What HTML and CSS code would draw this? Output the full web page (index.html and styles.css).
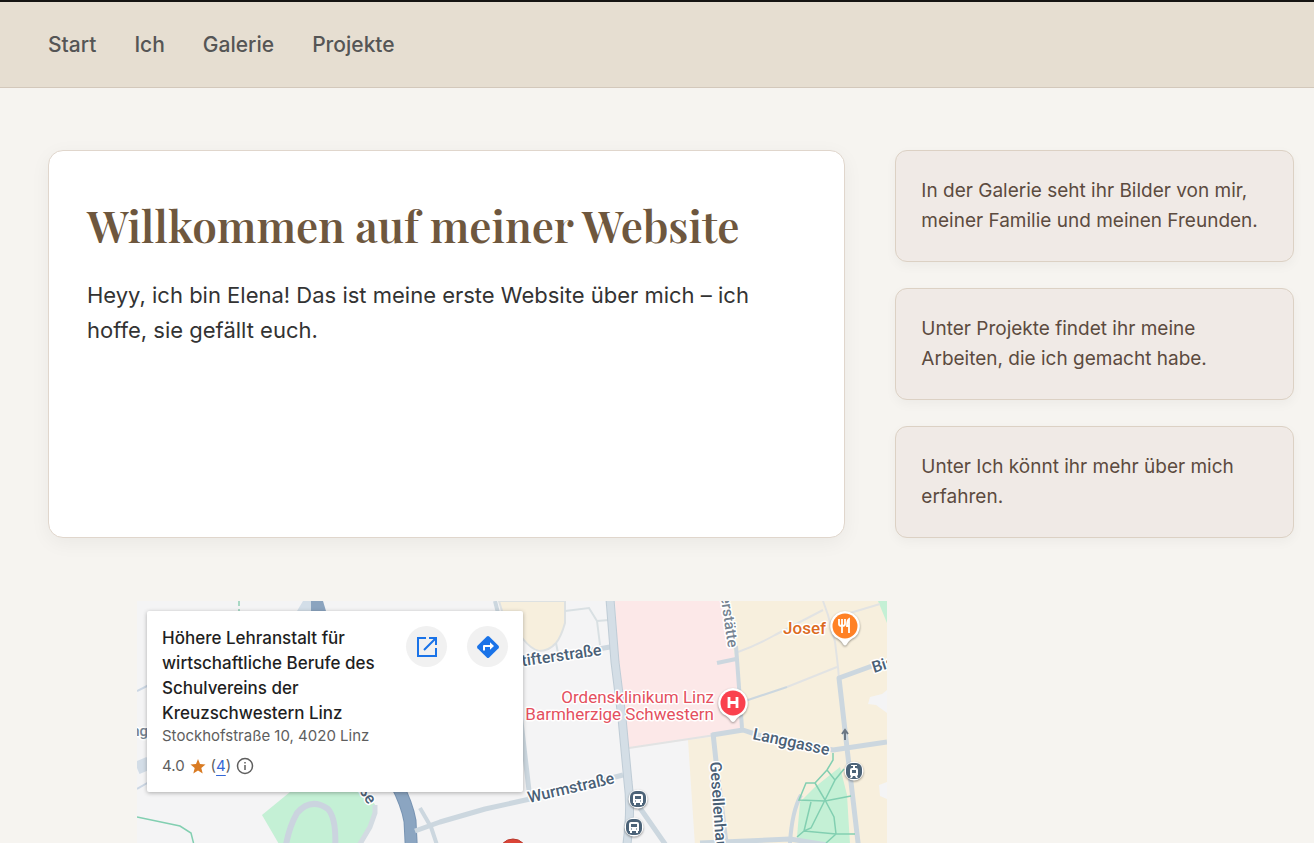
FILE: index.html
```html
<!DOCTYPE html>
<html lang="de">
<head>
<meta charset="utf-8">
<meta name="viewport" content="width=device-width, initial-scale=1">
<title>Willkommen auf meiner Website</title>
<link rel="stylesheet" href="styles.css">
</head>
<body>
<header class="site-header">
  <nav class="nav">
    <a href="#start">Start</a>
    <a href="#ich">Ich</a>
    <a href="#galerie">Galerie</a>
    <a href="#projekte">Projekte</a>
  </nav>
</header>
<main class="content">
  <section class="welcome">
    <h1>Willkommen auf meiner Website</h1>
    <p>Heyy, ich bin Elena! Das ist meine erste Website über mich – ich hoffe, sie gefällt euch.</p>
  </section>
  <aside class="hints">
    <p class="hint">In der Galerie seht ihr Bilder von mir, meiner Familie und meinen Freunden.</p>
    <p class="hint">Unter Projekte findet ihr meine Arbeiten, die ich gemacht habe.</p>
    <p class="hint">Unter Ich könnt ihr mehr über mich erfahren.</p>
  </aside>
</main>
<section class="map" aria-label="Karte">
  <svg class="map-canvas" viewBox="0 0 750 242" preserveAspectRatio="xMinYMin slice">
    <!-- areas -->
    <rect width="750" height="600" fill="#f4f4f5"/>
    <path d="M478 0L483 84L492 147L573 136L605 127L598 57L586 0Z" fill="#fce8e8"/>
    <path d="M586 0H750V260H559L551 139L573 136L605 127L598 57Z" fill="#f7efdd"/>
    <path d="M362 0H428V22Q424 36 419 42Q412 50 402 50Q394 48 386 38L368 20Z" fill="#f7efdd" stroke="#dde1e2" stroke-width="2"/>
    <path d="M741 0H750V22Z" fill="#c4f0d5"/>
    <path d="M733 96L745 93L750 89V112L739 104L731 103ZM742 184L750 181V198L743 195Z" fill="#f4f4f5"/>
    <path d="M660 236L663 201L678 186L703 166L710 194L714 260H690Z" fill="#c4f0d5"/>
    <path d="M125 214L153 191H230L240 207L235 224L221 250H146Z" fill="#c4f0d5"/>
    <!-- minor streets -->
    <g fill="none" stroke="#e2e3e3" stroke-width="2">
      <path d="M601 51Q620 44 638 34L686 9M686 0L691 14L698 41L701 66L702 78M713 12L743 3M650 86L700 66M492 147L605 130"/>
      <path d="M428 10L452 7L460 20L463 44M460 20L472 19M419 42L421 52" stroke="#d9e0e3"/>
      <path d="M102 0V10" stroke="#a9d8c5" stroke-dasharray="5 3"/>
    </g>
    <!-- river -->
    <path d="M160 10L166 0H178V10Z" fill="#d3dee8"/>
    <path d="M174 0H186L189 10H174Z" fill="#8ba4bf"/>
    <path d="M259 182Q270 203 273 220L275 260" fill="none" stroke="#7894b3" stroke-width="13"/>
    <path d="M259 182Q270 203 273 220L275 260" fill="none" stroke="#8ba5c1" stroke-width="11"/>
    <!-- streets -->
    <g fill="none" stroke="#ccd7df" stroke-width="5" stroke-linejoin="round">
      <path d="M575 134L606 129L630 137L696 149L750 141"/>
      <path d="M735 65L702 77L710 147L722 250"/>
      <path d="M576 132L579 160L590 250"/>
      <path d="M599 45L605 127M580 62L599 58" stroke-width="4"/>
      <path d="M605 101L650 86" stroke-width="2"/>
      <path d="M563 242L653 238L690 244" stroke-width="5"/>
      <path d="M664 194Q655 210 653 242" stroke-width="4"/>
      <path d="M503 207L533 250M383 112L393 198M386 61L473 46"/>
      <path d="M278 230L303 221L348 208L393 198L486 174"/>
      <path d="M283 207L294 226L302 250M358 0L361 12" stroke-width="4"/>
      <path d="M148 250Q151 228 160 212Q174 196 191 208Q200 218 198 250" stroke="#cbd4df" stroke-width="6"/>
      <path d="M238 204V212L233 226L220 248" stroke="#d3dbe2"/>
      <path d="M0 90L12 84M0 188L12 181" stroke="#ccd7e4" stroke-width="2"/>
      <path d="M0 167L12 162" stroke="#d3dde7" stroke-width="13"/>
    </g>
    <path d="M473 -2L478 61L485 117L491 181Q495 209 489 250" fill="none" stroke="#bfccd6" stroke-width="9"/>
    <path d="M473 -2L478 61L485 117L491 181Q495 209 489 250" fill="none" stroke="#d4dee6" stroke-width="7"/>
    <!-- park paths -->
    <g fill="none" stroke="#82cfb1" stroke-width="2">
      <path d="M696 152V159L690 169L678 182H669L662 199L688 200L714 195M690 169L698 179L688 199L678 182M707 168L698 179M688 199L674 227L667 230L674 201M688 199L697 216L699 233L689 242M660 236L667 230L699 233H718" stroke-width="1.500"/>
      <path d="M0 216L43 225L54 232L57 244" stroke-width="1.500"/>
    </g>
    <!-- street names -->
    <g class="street">
      <text transform="translate(465 54) rotate(-8)" text-anchor="end">Stifterstraße</text>
      <text transform="translate(392 202) rotate(-13)">Wurmstraße</text>
      <text transform="translate(615 138) rotate(12)">Langgasse</text>
      <text transform="translate(573 161) rotate(86)">Gesellenhausstraße</text>
      <text transform="translate(737 72) rotate(-18)">Bis</text>
      <text class="street-light" transform="translate(591 47) rotate(82)" text-anchor="end">Herstätte</text>
      <text class="street-light" x="11" y="135" text-anchor="end">ng</text>
      <text transform="translate(231 204) rotate(58)" text-anchor="end">straße</text>
    </g>
    <g class="place">
      <text x="577" y="102" text-anchor="end">Ordensklinikum Linz</text>
      <text x="577" y="119" text-anchor="end">Barmherzige Schwestern</text>
      <text class="place-food" x="689" y="33" text-anchor="end">Josef</text>
    </g>
    <path d="M708 139V129M705 133L708 129L711 133" fill="none" stroke="#6c7884" stroke-width="2"/>
    <!-- pins -->
    <g class="pin">
      <path d="M708 10A15 15 0 0 0 698 36Q704 39 706 43Q708 46 710 43Q712 39 718 36A15 15 0 0 0 708 10Z" fill="#fff"/>
      <circle cx="708" cy="25" r="12.500" fill="#ff8126"/>
      <path d="M702 18V23Q702 25 705 25Q708 25 708 23V18M705 18V32M712 32V18Q710 19 710 25H712" fill="none" stroke="#fff" stroke-width="1.800"/>
    </g>
    <g class="pin">
      <path d="M596 87A15 15 0 0 0 586 113Q592 116 594 120Q596 122 598 120Q600 116 606 113A15 15 0 0 0 596 87Z" fill="#fff"/>
      <circle cx="596" cy="102" r="12.500" fill="#fa414e"/>
      <path d="M592 96V107M600 96V107M592 101.500H600" fill="none" stroke="#fff" stroke-width="2.800"/>
    </g>
    <g id="bus" class="pin">
      <circle cx="501" cy="198" r="9.500" fill="#fff"/>
      <rect x="493" y="190" width="16" height="16" rx="6" fill="#4c6378"/>
      <path d="M496 195Q496 193 498 193H504Q506 193 506 195V202H505V204H503V202H499V204H497V202H496Z" fill="#fff"/>
      <rect x="498" y="195" width="6" height="3" fill="#4c6378"/>
      <path d="M498 200H499M503 200H504" stroke="#4c6378"/>
    </g>
    <use href="#bus" x="-4" y="28"/>
    <g class="pin">
      <circle cx="717" cy="170" r="9.500" fill="#fff"/>
      <rect x="709" y="162" width="16" height="16" rx="6" fill="#4c6378"/>
      <path d="M714 164H720V165H718V167H719Q721 167 721 169V174L720 175L721 177H719L718 175H716L715 177H713L714 175L713 174V169Q713 167 715 167H716V165H714Z" fill="#fff"/>
      <rect x="715" y="169" width="4" height="3" fill="#4c6378"/>
    </g>
    <circle cx="376" cy="252" r="14" fill="#db4437" stroke="#b8382c"/>
  </svg>
  <article class="place-card">
    <div class="place-info">
      <h2>Höhere Lehranstalt für wirtschaftliche Berufe des Schulvereins der Kreuzschwestern Linz</h2>
      <p class="address">Stockhofstraße 10, 4020 Linz</p>
      <div class="rating">
        <span>4.0</span>
        <svg width="16" height="16" viewBox="0 0 16 16"><path d="M8 1L10 6L15.500 6.400L11.300 10L12.700 15.500L8 12.500L3.300 15.500L4.700 10L.5 6.400L6 6Z" fill="#d97b23"/></svg>
        <span>(<a href="#bewertungen">4</a>)</span>
        <svg width="18" height="18" viewBox="0 0 18 18"><circle cx="9" cy="9" r="7.500" fill="none" stroke="#5e5e5e" stroke-width="1.500"/><path d="M9 8V13M9 5V6.600" stroke="#5e5e5e" stroke-width="1.500"/></svg>
      </div>
    </div>
    <div class="actions">
      <button type="button" aria-label="Karte vergrößern">
        <svg width="22" height="22" viewBox="0 0 22 22" fill="none" stroke="#1a73e8" stroke-width="2"><path d="M10 2H2V20H20V12M13 2H20V9M20 2L8 14"/></svg>
      </button>
      <button type="button" aria-label="Route">
        <svg width="24" height="24" viewBox="0 0 24 24"><path d="M10.800 1.500Q12 .4 13.200 1.500L22.500 10.800Q23.600 12 22.500 13.200L13.200 22.500Q12 23.600 10.800 22.500L1.500 13.200Q.4 12 1.500 10.800Z" fill="#1a73e8"/><path d="M7 15.500V11Q7 10 8 10H14V7.200L18 11L14 14.800V12H9V15.500Z" fill="#fff"/></svg>
      </button>
    </div>
  </article>
</section>
</body>
</html>
```
FILE: styles.css
```css
* {
  box-sizing: border-box;
}

body {
  display: flex;
  flex-direction: column;
  height: 100vh;
  margin: 0;
  background: #f6f4f0;
  color: #333;
  font-family: Inter, sans-serif;
}

h1,
h2,
p {
  margin: 0;
}

.site-header {
  padding: 24px 48px;
  background: #e6ded1;
  border-top: 2px solid #161412;
  border-bottom: 1px solid #d3c8bb;
}

.nav {
  display: flex;
  gap: 38px;
}

.nav a {
  color: #555;
  font-size: 21px;
  font-weight: 500;
  line-height: 37px;
  text-decoration: none;
}

.content {
  display: grid;
  grid-template-columns: 2fr 1fr;
  gap: 50px;
  padding: 62px 20px 63px 48px;
}

.welcome {
  padding: 38px;
  background: #fff;
  border: 1px solid #e0d6cc;
  border-radius: 15px;
  box-shadow: 0 5px 20px rgba(0, 0, 0, 0.05);
}

.welcome h1 {
  margin-bottom: 18px;
  color: #6e573e;
  font-family: "Playfair Display", "Liberation Serif", serif;
  font-size: 44px;
  font-weight: 600;
  line-height: 71px;
}

.welcome p {
  font-size: 22px;
  line-height: 35px;
}

.hints {
  display: grid;
  gap: 26px;
}

.hint {
  padding: 25px;
  background: #f0eae6;
  border: 1px solid #dcd1c4;
  border-radius: 12px;
  box-shadow: 0 4px 12px rgba(0, 0, 0, 0.04);
  color: #5c4b3f;
  font-size: 19px;
  line-height: 30px;
}

.map {
  position: relative;
  flex: 1;
  min-height: 242px;
  width: 750px;
  max-width: calc(100% - 157px);
  margin-left: 137px;
  overflow: hidden;
}

.map-canvas {
  display: block;
  width: 100%;
  height: 100%;
}

.street,
.place {
  font-family: Roboto, sans-serif;
  font-size: 16px;
  font-weight: 500;
  paint-order: stroke;
  stroke: #fff;
  stroke-width: 3px;
  stroke-linejoin: round;
}

.street {
  fill: #4a6076;
}

.street-light {
  fill: #758391;
  font-size: 15px;
}

.place {
  fill: #e4505e;
  font-size: 17px;
  font-weight: 400;
}

.place-food {
  fill: #dc6b1f;
  font-weight: 500;
}

.pin {
  filter: drop-shadow(0 1px 1px rgba(0, 0, 0, 0.4));
}

.place-card {
  position: absolute;
  top: 10px;
  left: 10px;
  display: flex;
  justify-content: space-between;
  width: 376px;
  padding: 15px;
  background: #fff;
  border-radius: 2px;
  box-shadow: 0 1px 4px rgba(0, 0, 0, 0.3);
  font-family: Inter, sans-serif;
}

.place-info {
  width: 228px;
}

.place-info h2 {
  color: #1f1f1f;
  font-size: 17px;
  font-weight: 500;
  line-height: 25px;
}

.address,
.rating {
  color: #5e5e5e;
  font-size: 15px;
  line-height: 20px;
}

.rating {
  display: flex;
  align-items: center;
  gap: 5px;
  margin-top: 10px;
  padding-bottom: 1px;
}

.rating a {
  color: #3367d6;
  text-underline-offset: 4px;
}

.actions {
  display: flex;
  gap: 20px;
}

.actions button {
  display: grid;
  place-items: center;
  width: 41px;
  height: 41px;
  padding: 0;
  background: #f1f1f1;
  border: 0;
  border-radius: 50%;
}
```
